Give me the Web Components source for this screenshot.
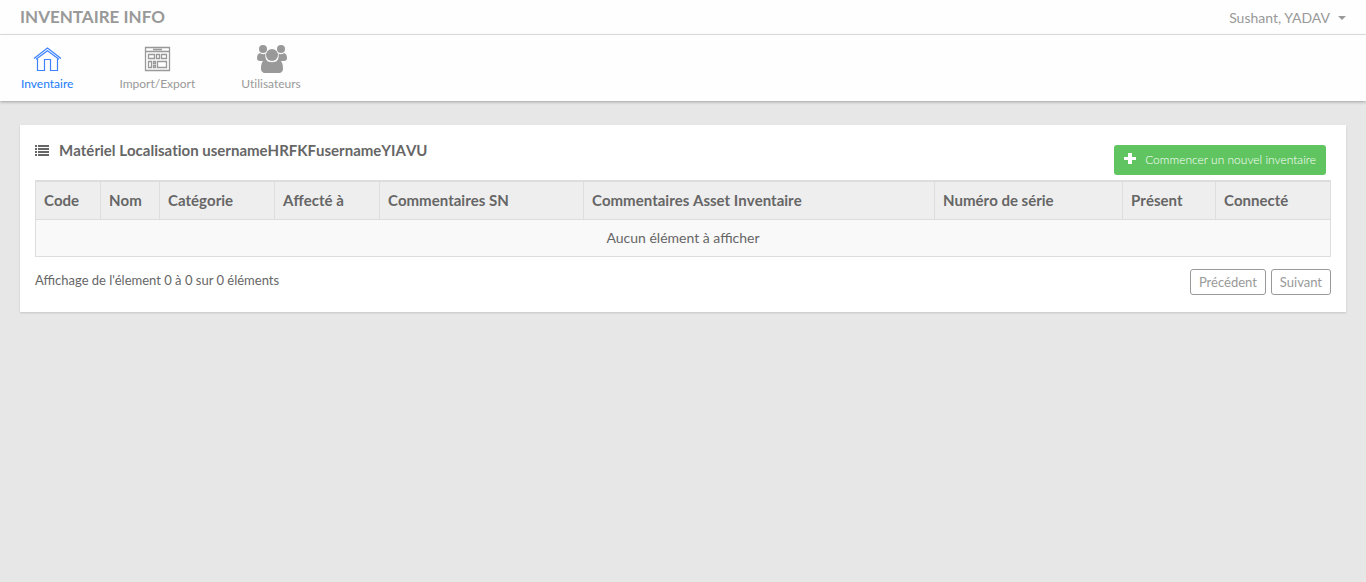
<!DOCTYPE html>
<html lang="fr">
<head>
<meta charset="utf-8">
<title>Inventaire Info</title>
<style>
body{margin:0;background:#e7e7e7;color:#666;font:14px/20px Lato,sans-serif}
</style>
</head>
<body>
<inventory-app></inventory-app>
<script>
function define(name, markup) {
  const template = document.createElement('template');
  template.innerHTML = markup;
  customElements.define(name, class extends HTMLElement {
    constructor() {
      super();
      this.attachShadow({mode: 'open'}).append(template.content.cloneNode(true));
    }
    connectedCallback() {
      const link = this.shadowRoot.querySelector('a[data-link]');
      if (link && this.hasAttribute('current')) link.setAttribute('aria-current', 'page');
    }
  });
}

define('top-bar', `
<style>
:host{display:flex;justify-content:space-between;align-items:center;height:34px;padding:0 20px;background:#fefefe;border-bottom:1px solid #e4e4e4;color:#999}
.brand{font-size:17px;line-height:34px;font-weight:700;color:inherit;text-decoration:none}
button{display:flex;align-items:center;gap:8px;border:0;padding:2px 0 0;background:none;color:inherit;font:inherit;cursor:pointer}
i{border:4px solid transparent;border-top-color:#999;border-bottom:0}
</style>
<a class="brand" href="#">INVENTAIRE INFO</a>
<button type="button" aria-haspopup="true"><slot></slot><i></i></button>`);

define('nav-item', `
<style>
:host{display:block;color:#999}
:host([current]){color:#1a7cf9}
a{display:flex;flex-direction:column;align-items:center;color:inherit;text-decoration:none;font-size:12px;line-height:18px;font-variant-ligatures:none}
</style>
<a href="#" data-link><slot name="icon"></slot><slot></slot></a>`);

define('main-nav', `
<style>
:host{display:block;position:relative;background:#fefefe;box-shadow:0 1px 3px rgba(0,0,0,.3)}
nav{display:flex;gap:46px;padding:8px 21px}
svg{display:block;width:32px;height:32px}
</style>
<nav aria-label="Navigation principale">
<nav-item current><svg slot="icon" viewBox="0 0 32 32" fill="none" stroke="#3d83ff" stroke-width="1.200" aria-hidden="true"><path d="M3 15.500 16.500 5 30 15.500M5 16.200 16.500 7.700 28 16.200M6.500 16V27.500H13.500V16.500H19.500V27.500H26.500V16"/></svg>Inventaire</nav-item>
<nav-item><svg slot="icon" viewBox="0 0 32 32" fill="none" stroke="#999" stroke-width="1.300" aria-hidden="true"><path d="M4.500 4.500H28.500V27.500H4.500ZM4 8.500H29M12 6.500H21M7.500 11.500H13.500V15.500H7.500ZM15.500 11.500H18.500V15.500H15.500ZM20.500 11.500H25.500V15.500H20.500ZM7.500 18.500H10.500V24.500H7.500ZM12.500 18.500H14.500V20.500H12.500ZM12.500 22.500H14.500V24.500H12.500ZM16.500 18.500H25.500V24.500H16.500Z"/></svg>Import/Export</nav-item>
<nav-item><svg slot="icon" viewBox="0 0 32 32" fill="#999" aria-hidden="true"><circle cx="8" cy="6" r="4"/><circle cx="26" cy="6" r="4"/><path d="M5 10C6.500 11.500 9.500 11.500 10.500 10.500C10 13 10.500 16 12 18H5C3 18 2 17 2 15C2 12.500 3 10.500 5 10ZM29 10C27.500 11.500 24.500 11.500 23.500 10.500C24 13 23.500 16 22 18H29C31 18 32 17 32 15C32 12.500 31 10.500 29 10Z"/><circle cx="17" cy="12" r="6"/><path d="M11 17C14 20 20 20 23 17C27 17 28 21 28 26C28 28 26.500 30 24 30H10C7.500 30 6 28 6 26C6 21 7 17 11 17Z"/></svg>Utilisateurs</nav-item>
</nav>`);

define('content-panel', `
<style>
:host{display:block;padding:15px;background:#fff;box-shadow:0 1px 2px rgba(0,0,0,.15)}
header{display:flex;justify-content:space-between;align-items:flex-start;height:40px}
h1{display:flex;align-items:center;gap:10px;margin:0;font-size:15px;line-height:21px;font-weight:700;font-variant-ligatures:none;font-kerning:none}
h1 svg{width:14px;height:12px}
</style>
<header><h1><svg viewBox="0 0 14 12" fill="#666" aria-hidden="true"><path d="M0 0h2v2H0zM3 0h11v2H3zM0 3h2v2H0zM3 3h11v2H3zM0 6h2v2H0zM3 6h11v2H3zM0 9h2v2H0zM3 9h11v2H3z"/></svg><slot name="title"></slot></h1><slot name="action"></slot></header>
<slot></slot>`);

define('primary-button', `
<style>
:host{display:block;padding:5px 5px 0 0}
button{display:flex;align-items:center;gap:9px;height:30px;padding:0 10px;border:0;border-radius:3px;background:#60c560;color:#fff;font:300 12px/18px Lato,sans-serif;cursor:pointer}
svg{width:12px;height:12px;margin-bottom:2px}
</style>
<button type="button"><svg viewBox="0 0 12 12" fill="#fff" aria-hidden="true"><path d="M4 0h4v4h4v3H8v4H4V7H0V4h4z"/></svg><slot></slot></button>`);

define('asset-table', `
<style>
:host{display:block}
table{width:100%;table-layout:fixed;border-collapse:collapse;border:1px solid #ddd;border-top-width:2px}
th,td{padding:8px;border:1px solid #ddd}
th{border-top:2px solid #ddd;background:#eee;font-size:15px;line-height:21px;text-align:left;white-space:nowrap;font-kerning:none}
td{background:#f9f9f9;text-align:center}
</style>
<table>
<colgroup><col style="width:65px"><col style="width:59px"><col style="width:115px"><col style="width:105px"><col style="width:204px"><col style="width:351px"><col style="width:188px"><col style="width:93px"><col style="width:115px"></colgroup>
<thead><tr><th>Code</th><th>Nom</th><th>Catégorie</th><th>Affecté à</th><th>Commentaires SN</th><th>Commentaires Asset Inventaire</th><th>Numéro de série</th><th>Présent</th><th>Connecté</th></tr></thead>
<tbody><tr><td colspan="9">Aucun élément à afficher</td></tr></tbody>
</table>`);

define('table-pager', `
<style>
:host{display:flex;justify-content:space-between;align-items:flex-start;padding:12px 0 2px}
p{margin:0;padding-top:1px;font-size:13px}
div{display:flex;gap:5px}
button{height:26px;padding:0 8px;border:1px solid #999;border-radius:3px;background:#fff;color:#999;font:13px/20px Lato,sans-serif;cursor:pointer}
</style>
<p><slot></slot></p>
<div><button type="button">Précédent</button><button type="button">Suivant</button></div>`);

define('inventory-app', `
<style>
:host{display:block}
main{padding:24px 20px}
</style>
<top-bar>Sushant, YADAV</top-bar>
<main-nav></main-nav>
<main><content-panel>
<span slot="title">Matériel Localisation usernameHRFKFusernameYIAVU</span>
<primary-button slot="action">Commencer un nouvel inventaire</primary-button>
<asset-table></asset-table>
<table-pager>Affichage de l'élement 0 à 0 sur 0 éléments</table-pager>
</content-panel></main>`);
</script>
</body>
</html>
